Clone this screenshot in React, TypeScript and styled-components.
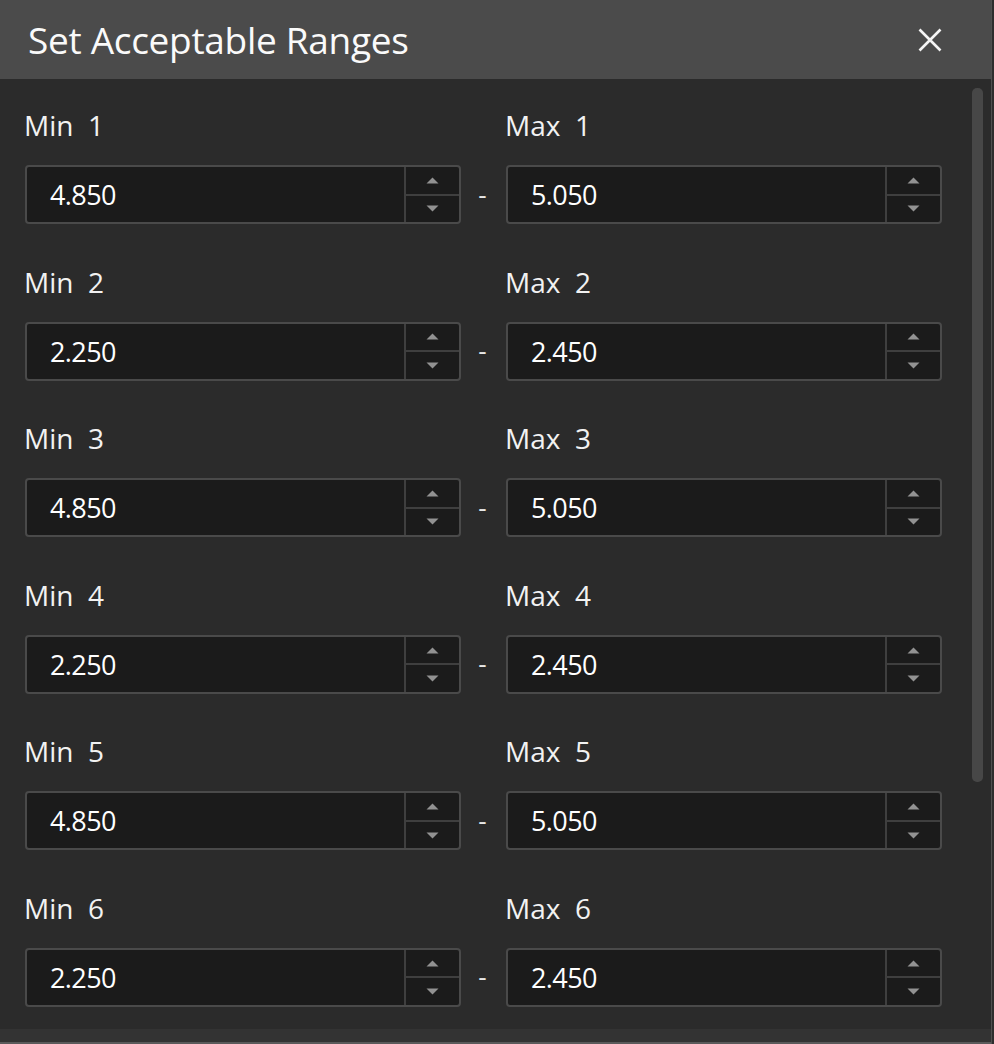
import styled, { createGlobalStyle } from 'styled-components'

const GlobalStyle = createGlobalStyle`
  html, body {
    margin: 0;
    padding: 0;
    background: #2b2b2b;
  }
  * {
    box-sizing: border-box;
  }
`

const Screen = styled.div`
  width: 994px;
  height: 1044px;
  display: flex;
  font-family: 'Open Sans', 'Noto Sans', sans-serif;
  color: #f2f2f2;
  overflow: hidden;
`

const Dialog = styled.div`
  width: 991px;
  height: 100%;
  display: flex;
  flex-direction: column;
  background: #2b2b2b;
`

const EdgeStrip = styled.div`
  flex: 1;
  background: #2e2e2e;
  border-left: 1px solid #505050;
`

const TitleBar = styled.header`
  height: 79px;
  flex: none;
  display: flex;
  align-items: center;
  justify-content: space-between;
  padding: 0 49px 0 28px;
  background: #4b4b4b;
`

const Title = styled.h1`
  margin: 0;
  font-size: 37px;
  font-weight: 400;
  letter-spacing: -0.3px;
  color: #fafafa;
`

const CloseButton = styled.button`
  width: 24px;
  height: 24px;
  padding: 0;
  border: none;
  background: none;
  display: flex;
  cursor: pointer;
`

const Body = styled.div`
  flex: 1;
  display: flex;
  min-height: 0;
`

const Content = styled.div`
  flex: 1;
  padding: 26px 0 0 24px;
  display: grid;
  grid-template-columns: 437px 45px 436px;
  grid-auto-rows: 119px;
  row-gap: 37.6px;
  align-content: start;
`

const Field = styled.div`
  display: flex;
  flex-direction: column;
  padding-left: ${(p: { $inset?: number }) => p.$inset ?? 0}px;
`

const Label = styled.div`
  flex: none;
  font-size: 28px;
  line-height: 40px;
  height: 60px;
  margin-left: -1px;
  white-space: pre;
`

const SpinBox = styled.div`
  flex: none;
  height: 59px;
  display: flex;
  background: #1b1b1b;
  border: 2px solid #4a4a4a;
  border-radius: 4px;
`

const Value = styled.div`
  flex: 1;
  padding-left: 23px;
  font-size: 27px;
  line-height: 55px;
  letter-spacing: -0.6px;
  color: #ffffff;
`

const Spinner = styled.div`
  width: 55px;
  display: flex;
  flex-direction: column;
  border-left: 2px solid #3f3f3f;
`

const SpinHalf = styled.div`
  flex: 1;
  display: flex;
  align-items: center;
  justify-content: center;
  & + & {
    border-top: 2px solid #3f3f3f;
  }
`

const Dash = styled.div`
  margin-top: 60px;
  height: 59px;
  display: flex;
  align-items: center;
  justify-content: center;
  padding: 0 2px 2px 0;
  font-size: 26px;
  line-height: 20px;
  color: #e8e8e8;
`

const ScrollTrack = styled.div`
  width: 26px;
  flex: none;
  padding: 9px 8px 0 7px;
`

const ScrollThumb = styled.div`
  width: 11px;
  height: 694px;
  border-radius: 5px;
  background: #474747;
`

const Footer = styled.div`
  height: 15px;
  flex: none;
  background: #333333;
  border-bottom: 2px solid #5a5a5a;
`

const Arrow = ({ down }: { down?: boolean }) => (
  <svg width="13" height="7" viewBox="0 0 13 7">
    <path d={down ? 'M0.5 0.5 H12.5 L6.5 6.5 Z' : 'M0.5 6.5 H12.5 L6.5 0.5 Z'} fill="#929292" />
  </svg>
)

const NumberBox = ({ value }: { value: string }) => (
  <SpinBox>
    <Value>{value}</Value>
    <Spinner>
      <SpinHalf>
        <Arrow />
      </SpinHalf>
      <SpinHalf>
        <Arrow down />
      </SpinHalf>
    </Spinner>
  </SpinBox>
)

const ranges = [
  ['4.850', '5.050'],
  ['2.250', '2.450'],
  ['4.850', '5.050'],
  ['2.250', '2.450'],
  ['4.850', '5.050'],
  ['2.250', '2.450'],
]

export default function App() {
  return (
    <Screen>
      <GlobalStyle />
      <Dialog>
        <TitleBar>
          <Title>Set Acceptable Ranges</Title>
          <CloseButton aria-label="Close">
            <svg width="24" height="24" viewBox="0 0 24 24">
              <path d="M1.5 1.5 L22.5 22.5 M22.5 1.5 L1.5 22.5" stroke="#f5f5f5" strokeWidth="2.6" />
            </svg>
          </CloseButton>
        </TitleBar>
        <Body>
          <Content>
            {ranges.map(([min, max], i) => [
              <Field key={`min${i}`} $inset={1}>
                <Label>{`Min  ${i + 1}`}</Label>
                <NumberBox value={min} />
              </Field>,
              <Dash key={`dash${i}`}>-</Dash>,
              <Field key={`max${i}`}>
                <Label>{`Max  ${i + 1}`}</Label>
                <NumberBox value={max} />
              </Field>,
            ])}
          </Content>
          <ScrollTrack>
            <ScrollThumb />
          </ScrollTrack>
        </Body>
        <Footer />
      </Dialog>
      <EdgeStrip />
    </Screen>
  )
}
